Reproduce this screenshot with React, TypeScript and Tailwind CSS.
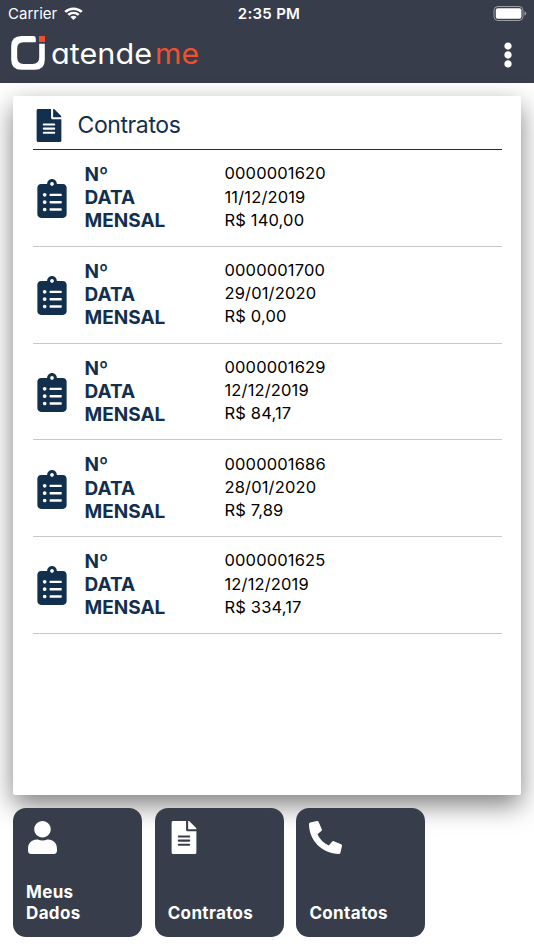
import { FaClipboardList, FaEllipsisV, FaFileAlt, FaPhone, FaUser } from 'react-icons/fa'

const contratos = [
  { numero: '0000001620', data: '11/12/2019', mensal: 'R$ 140,00' },
  { numero: '0000001700', data: '29/01/2020', mensal: 'R$ 0,00' },
  { numero: '0000001629', data: '12/12/2019', mensal: 'R$ 84,17' },
  { numero: '0000001686', data: '28/01/2020', mensal: 'R$ 7,89' },
  { numero: '0000001625', data: '12/12/2019', mensal: 'R$ 334,17' },
]

const menu = [
  { label: 'Meus Dados', icon: <FaUser className="ml-[2px] h-[33px] w-[29px]" /> },
  { label: 'Contratos', icon: <FaFileAlt className="ml-[3px] h-[33px] w-[26px]" /> },
  { label: 'Contatos', icon: <FaPhone className="h-[33px] w-[33px] -scale-x-100" /> },
]

function StatusBar() {
  return (
    <div className="grid h-[27px] grid-cols-3 items-center pr-[7px] pl-2 text-[15px]">
      <div className="flex items-center gap-[7px]">
        <span className="pt-[2px]">Carrier</span>
        <svg width="19" height="14" viewBox="0 0 19 15" preserveAspectRatio="none" fill="none" stroke="currentColor" strokeWidth="2.6">
          <path d="M1.2 5.2a11.8 11.8 0 0 1 16.6 0" />
          <path d="M4.3 8.4a7.4 7.4 0 0 1 10.4 0" />
          <path d="M9.5 13.9 6.4 10.8a4.4 4.4 0 0 1 6.2 0z" fill="currentColor" stroke="none" />
        </svg>
      </div>
      <span className="pt-[2px] pl-[3px] text-center font-semibold tracking-[0.3px] whitespace-nowrap">2:35 PM</span>
      <svg className="justify-self-end" width="34" height="16" viewBox="0 0 34 16">
        <rect x="1" y="0.5" width="29" height="14" rx="4" fill="none" stroke="#9a9ea6" />
        <rect x="2.8" y="2.3" width="25.6" height="10.4" rx="2" fill="white" />
        <path d="M31.5 5.2q1.8.8 1.8 2.3t-1.8 2.3z" fill="#9a9ea6" />
      </svg>
    </div>
  )
}

function Logo() {
  return (
    <svg width="190" height="38" viewBox="0 0 190 38">
      <path
        d="M24.8 3.4V7.2H12.5Q6.2 7.2 6.2 13.5V22.5Q6.2 29 12.5 29H21.5Q28.2 29 28.2 22.5V8.8H33.8V24.7Q33.8 34.8 23.7 34.8H10.5Q0.2 34.8 0.2 24.7V11.2Q0.2 1.1 10.5 1.1H22.4Q24.8 1.1 24.8 3.4Z"
        fill="white"
      />
      <rect x="28" y="1" width="6" height="6" fill="#f1502f" />
      <g
        className="font-['Inter',sans-serif] font-normal"
        fontSize="29"
        style={{ fontFeatureSettings: '"cv11"' }}
      >
        <text x="40" y="29" fill="white" textLength="101" lengthAdjust="spacingAndGlyphs">
          atende
        </text>
        <text x="144" y="29" fill="#f1502f" textLength="44" lengthAdjust="spacingAndGlyphs">
          me
        </text>
      </g>
    </svg>
  )
}

export default function App() {
  return (
    <div className="flex h-[950px] w-[534px] flex-col overflow-hidden bg-white font-['Inter',sans-serif]">
      {/* Header */}
      <header className="h-[83px] shrink-0 bg-[#373d4a] text-white">
        <StatusBar />
        <div className="flex items-center justify-between pt-[8px] pr-[21px] pl-[11px]">
          <Logo />
          <FaEllipsisV className="mt-px h-[26px] w-[10px]" />
        </div>
      </header>

      {/* Lista de contratos */}
      <main className="mx-[13px] mt-[13px] h-[699px] shrink-0 rounded-[2px] bg-white px-[19.5px] shadow-[0_10px_26px_rgba(0,0,0,0.5)]">
        <div className="flex h-[54px] items-center gap-[16px] border-b border-[#12304e] pt-[4px] pl-[3px] text-[#12304e]">
          <FaFileAlt className="mt-px h-[33px] w-[26px]" />
          <h1 className="pt-px text-[23px] tracking-[-0.4px]">Contratos</h1>
        </div>
        {contratos.map((contrato) => (
          <div
            key={contrato.numero}
            className="flex h-[96.75px] items-center border-b border-[#c8c8c8]"
          >
            <FaClipboardList className="mt-[2px] ml-[4.5px] h-[39px] w-[30px] shrink-0 text-[#12304e]" />
            <div className="ml-[17.5px] w-[140px] text-[19px] leading-[23.2px] font-bold text-[#12304e]">
              <p>Nº</p>
              <p>DATA</p>
              <p>MENSAL</p>
            </div>
            <div className="pb-[1.5px] text-[16.5px] leading-[23.2px] tracking-[0.15px] text-black">
              <p>{contrato.numero}</p>
              <p>{contrato.data}</p>
              <p>{contrato.mensal}</p>
            </div>
          </div>
        ))}
      </main>

      {/* Menu */}
      <nav className="relative flex gap-[12.7px] px-[13px] pt-[13px]">
        {menu.map((item) => (
          <button
            key={item.label}
            className="flex h-[129px] w-[129px] flex-col items-start justify-between rounded-[13px] bg-[#373d4a] px-[13px] pt-[13px] pb-[13px] text-left text-[17px] leading-[21px] font-bold tracking-[0.35px] text-white"
          >
            {item.icon}
            <span className="w-[90px]">{item.label}</span>
          </button>
        ))}
      </nav>
    </div>
  )
}
